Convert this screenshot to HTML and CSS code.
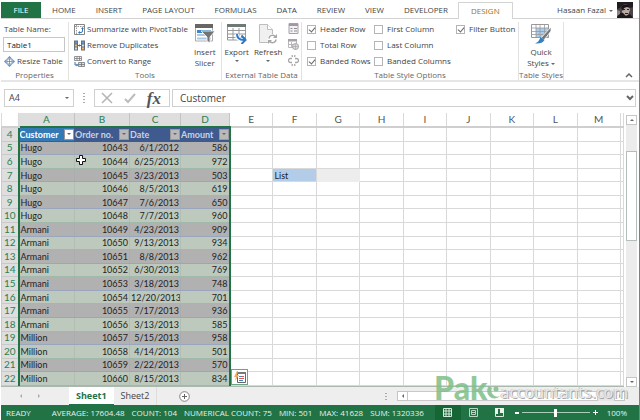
FILE: index.html
```
<!DOCTYPE html>
<html lang="en">
<head>
<meta charset="utf-8">
<title>Table workbook</title>
<link rel="stylesheet" href="styles.css">
<script src="sheet.js" defer></script>
</head>
<body>
<div class="app">
  <nav class="tabs">
    <a class="tab file" href="#file">FILE</a>
    <a class="tab" href="#home">HOME</a>
    <a class="tab" href="#insert">INSERT</a>
    <a class="tab" href="#layout">PAGE LAYOUT</a>
    <a class="tab" href="#formulas">FORMULAS</a>
    <a class="tab" href="#data">DATA</a>
    <a class="tab" href="#review">REVIEW</a>
    <a class="tab" href="#view">VIEW</a>
    <a class="tab" href="#developer">DEVELOPER</a>
    <a class="tab design" href="#design">DESIGN</a>
    <button class="user" type="button">Hasaan Fazal <span class="caret"></span></button>
    <svg class="avatar" viewBox="0 0 16 16"><rect width="16" height="16" fill="#4b4348"/><path d="M0 0h16v5l-3 1-1-3-5-1-4 4-3 1z" fill="#211c20"/><path d="M5 5l3-2 4 1 1 4-2 5-3 1-3-4z" fill="#b7a9a4"/><path d="M4 6l2-3 6 0 1 3-3-1-3 1-1 3z" fill="#171216"/><path d="M6 7h2v1H6zM10 7h2v1h-2zM8 11h3v1H8z" fill="#2b2024"/><path d="M0 16l2-5 4 0 3 3 4-2 3 4z" fill="#1c181c"/><path d="M0 8l3 1v3l-3 2z" fill="#8c8585"/></svg>
  </nav>

  <section class="ribbon">
    <div class="group">
      <div class="body stack">
        <label class="item" for="tname">Table Name:</label>
        <input class="tname" id="tname" value="Table1">
        <button class="item" type="button"><svg class="ico" viewBox="0 0 11 11"><path d="M5.5 0l2 2h-4zM5.5 11l2-2h-4zM0 5.5l2-2v4zM11 5.5l-2-2v4z" fill="#4d8fcb"/><circle cx="5.5" cy="5.5" r="3.800" fill="#a9c9e8"/><path d="M3 3h5v5H3zM3 5.500h5M5.500 3v5" fill="#fff" stroke="#6a7a88" stroke-width=".7"/></svg>Resize Table</button>
      </div>
      <div class="caption">Properties</div>
    </div>
    <div class="group">
      <div class="body">
        <div class="stack">
          <button class="item" type="button"><svg class="ico" viewBox="0 0 11 11"><path d="M.5.500h10v10H.5z" fill="#fff" stroke="#858585"/><path d="M1 2.500h9M2.500 1v9" stroke="#9a9a9a" stroke-dasharray="1.500 1"/><path d="M5 8.500h2q1.500 0 1.500-1.500V4.500" fill="none" stroke="#2f78bf"/><path d="M8.500 3l1.500 2H7zM4 8.500L6 7v3z" fill="#2f78bf"/></svg>Summarize with PivotTable</button>
          <button class="item" type="button"><svg class="ico" viewBox="0 0 11 11"><path d="M0 .5h4v10H0zM7 .5h4v10H7z" fill="#676e76"/><path d="M1 1.500h2v2H1zM8 1.500h2v2H8z" fill="#5b9bd5"/><path d="M1 4.500h2v2H1zM8 7.500h2v2H8z" fill="#f0b35b"/><path d="M1 7.500h2v2H1zM8 4.500h2v2H8z" fill="#cde0f2"/><path d="M4 5.500h3M5.500 4.500v2" stroke="#2f78bf"/></svg>Remove Duplicates</button>
          <button class="item" type="button"><svg class="ico" viewBox="0 0 11 11"><path d="M.5.500h7v4h-7zM.5 2.500h7M3 .5v4M5.500.500v4" fill="#f4f4f4" stroke="#7d7d7d" stroke-width=".8"/><path d="M4.500 6.500h6v4h-6zM4.500 8.500h6M7.500 6.500v4" fill="#cfe1f2" stroke="#777" stroke-width=".8"/><path d="M1 6v3h2" fill="none" stroke="#2f78bf"/><path d="M2.500 7.500l2 1.500-2 1.500z" fill="#2f78bf"/></svg>Convert to Range</button>
        </div>
        <button class="big" type="button"><svg class="bigico" viewBox="0 0 20 20"><path d="M.5 1h17v16H.5z" fill="#fff" stroke="#aaa"/><path d="M0 0h18v4H0z" fill="#666"/><path d="M2 6h14v3H2z" fill="#3f86c6"/><path d="M2 10h14v2H2zM2 13.500h14v2H2z" fill="#a9c9e8"/><path d="M6 7h14l-5 6v6l-3-2v-4z" fill="#737373" stroke="#fff" stroke-width=".8"/></svg>Insert<br>Slicer</button>
      </div>
      <div class="caption">Tools</div>
    </div>
    <div class="group">
      <div class="body center">
        <button class="big export" type="button"><svg class="bigico" viewBox="0 0 20 20"><path d="M.5 1h18v15H.5zM.5 6.500h18M.5 10h18M.5 13.500h18M6 4v12M12 4v12" fill="#fff" stroke="#999"/><path d="M0 0h19v3H0z" fill="#6d7a72"/><path d="M10 10c0 5 3 6 6 6" fill="none" stroke="#fff" stroke-width="4"/><path d="M10 10c0 5 3 6 7 6M14.500 11.500l4 4.500-4 4" fill="none" stroke="#2f78c4" stroke-width="2"/></svg>Export<span class="caret"></span></button>
        <button class="big refresh" type="button"><svg class="bigico" viewBox="0 0 20 20"><path d="M1.500.500h8l5 5v13h-13z" fill="#f0f0f0" stroke="#bdbdbd"/><path d="M9.500.500v5h5" fill="#fff" stroke="#bdbdbd"/><circle cx="14.500" cy="15" r="5" fill="#fff"/><path d="M11 14.500a3.500 3.500 0 0 1 6.500-1.500M18 15.500a3.500 3.500 0 0 1-6.500 1.500" fill="none" stroke="#a8a8a8" stroke-width="1.500"/><path d="M19 10v4h-4zM10 20v-4h4z" fill="#a8a8a8"/></svg>Refresh<span class="caret"></span></button>
        <div class="stack minis">
          <svg class="ico" viewBox="0 0 11 11"><path d="M1 .5h9v10H1z" fill="#f3f1f4" stroke="#a7a0aa"/><path d="M1 1h9v2H1z" fill="#a396a8"/><path d="M2.500 5.500h2M2.500 8h2M6 5.500h3M6 8h3" stroke="#8f8a92"/></svg>
          <svg class="ico" viewBox="0 0 11 11"><path d="M.5.500h8v8h-8zM.5 5.500h8M3.500 3v6" fill="#fff" stroke="#bab6bc"/><path d="M0 0h9v2.500H0z" fill="#aaa0ad"/><circle cx="7.500" cy="7.500" r="3" fill="#ddd" stroke="#a5a5a5"/><path d="M4.500 7.500h6M7.500 4.500v6" stroke="#a5a5a5" stroke-width=".6"/></svg>
          <svg class="ico" viewBox="0 0 11 11"><path d="M4 3.500H2.500a2 2 0 0 0 0 4H4M7 3.500h1.500a2 2 0 0 1 0 4H7M4 0l.5 2M7 0l-.5 2M4 11l.5-2M7 11l-.5-2" fill="none" stroke="#a8a8a8" stroke-width="1.300"/></svg>
        </div>
      </div>
      <div class="caption">External Table Data</div>
    </div>
    <div class="group">
      <div class="body checks">
        <label><input type="checkbox" checked>Header Row</label>
        <label><input type="checkbox">First Column</label>
        <label><input type="checkbox" checked>Filter Button</label>
        <label><input type="checkbox">Total Row</label>
        <label><input type="checkbox">Last Column</label>
        <span></span>
        <label><input type="checkbox" checked>Banded Rows</label>
        <label><input type="checkbox">Banded Columns</label>
      </div>
      <div class="caption">Table Style Options</div>
    </div>
    <div class="group">
      <div class="body center">
        <button class="big" type="button"><svg class="bigico" viewBox="0 0 20 20"><path d="M.5.500h17v13H.5z" fill="#fff" stroke="#999"/><path d="M5 4h12v9H5z" fill="#a9cdec"/><path d="M.5 4h17M.5 7.500h17M.5 10.500h17M5 .5v13M9 .5v13M13.500.500v13" stroke="#999" stroke-width=".8"/><path d="M20 3v4l-7 9-3-2z" fill="#777" stroke="#fff" stroke-width=".8"/><path d="M9.500 13l4 3q-2 4-9.500 3.500 4-1.500 5.500-6.500z" fill="#3580c3"/></svg>Quick<br><span>Styles <span class="caret"></span></span></button>
      </div>
      <div class="caption">Table Styles</div>
    </div>
    <div class="collapse"><svg viewBox="0 0 8 6"><path d="M1 5l3-3 3 3" fill="none" stroke="#666" stroke-width="1.500"/></svg></div>
  </section>

  <section class="formula">
    <div class="box name"><span>A4</span><span class="caret"></span></div>
    <div class="dots"></div>
    <div class="box fx">
      <svg viewBox="0 0 12 12"><path d="M1 1l10 10M11 1L1 11" stroke="#b4b4b4" stroke-width="1.500"/></svg>
      <svg viewBox="0 0 12 12"><path d="M1 7l3 3 7-8" fill="none" stroke="#bcbcbc" stroke-width="2"/></svg>
      <i>fx</i>
    </div>
    <div class="box content"><span>Customer</span><svg viewBox="0 0 8 6"><path d="M1 1l3 3 3-3" fill="none" stroke="#666" stroke-width="2"/></svg></div>
  </section>

  <section class="work">
    <div class="sheet">
      <table class="grid">
        <colgroup><col class="c0"><col class="ca"><col class="cb"><col class="cc"><col class="cd"><col><col><col><col><col><col><col><col><col><col class="ce"></colgroup>
        <thead></thead>
        <tbody></tbody>
      </table>
      <svg class="cursor" viewBox="0 0 10 10"><path d="M3.500.500h3v3h3v3h-3v3h-3v-3h-3v-3h3z" fill="#fff" stroke="#111"/></svg>
      <button class="quick" type="button" aria-label="Quick analysis"><svg viewBox="0 0 12 12"><path d="M3.500 2.500h8v9h-8z" fill="#fff" stroke="#666"/><path d="M3 1h9v2H3z" fill="#777"/><path d="M5 5.500h3M5 9.500h4" stroke="#3f86c6"/><path d="M8 5.500h2M5 7.500h5" stroke="#d65b4e"/><path d="M3 0L0 6h2l-1 4 4-6H3l1-4z" fill="#efaa5c"/></svg></button>
    </div>
    <div class="vscroll"><span class="sb up"></span><span class="thumb"></span><span class="sb down"></span></div>
  </section>

  <footer class="sheets">
    <div class="arrows"><span class="prev"></span><span class="next"></span></div>
    <a class="st active" href="#s1">Sheet1</a>
    <a class="st" href="#s2">Sheet2</a>
    <button class="add" type="button" aria-label="New sheet"><svg viewBox="0 0 11 11"><circle cx="5.500" cy="5.500" r="4.800" fill="#fff" stroke="#777" stroke-width=".9"/><path d="M3 5.500h5M5.500 3v5" stroke="#666"/></svg></button>
    <div class="dots"></div>
    <div class="hscroll"><span class="sb lf"></span><span class="hthumb"></span><span class="sb rt"></span></div>
    <div class="mark"><b>Pak</b><svg viewBox="0 0 16 18"><path d="M5 3a7 7 0 1 0 11 10a6 6 0 0 1-8-8z" fill="#7fbf88"/><circle cx="12" cy="6" r="2.500" fill="#7fbf88"/></svg><span>accountants.com</span></div>
  </footer>

  <div class="status">
    <span>READY</span><span class="avg">AVERAGE: 17604.48</span><span>COUNT: 104</span><span>NUMERICAL COUNT: 75</span><span>MIN: 501</span><span>MAX: 41628</span><span>SUM: 1320336</span>
    <div class="tools">
      <div class="views">
        <span class="on"><svg viewBox="0 0 9 9"><path d="M.5.500h8v8h-8zM.5 3h8M.5 6h8M3 .5v8M6 .5v8" fill="none" stroke="#d9eadf"/></svg></span>
        <span><svg viewBox="0 0 9 9"><path d="M.5.500h8v8h-8zM2.500 2.500h4v4h-4zM3 4.500h3" fill="none" stroke="#b8d6c3"/></svg></span>
        <span><svg viewBox="0 0 9 9"><path d="M.5.500h8v8h-8z" fill="none" stroke="#d9eadf"/><path d="M0 0h3v6H0zM5 0h4v5H5z" fill="#e9f3ec"/></svg></span>
      </div>
      <div class="zoom"><span class="minus"></span><input type="range" aria-label="Zoom" value="50"><span class="plus"></span></div>
      <span class="pct">100%</span>
    </div>
  </div>
</div>
</body>
</html>
```
FILE: styles.css
```
* { box-sizing: border-box; }
body { margin: 0; font: 8px/12px "Open Sans", sans-serif; color: #444; background: #fff; }
button, input { font: inherit; color: inherit; margin: 0; padding: 0; border: 0; background: none; }
button { cursor: pointer; }
a { color: inherit; text-decoration: none; }
svg { display: block; flex: none; }
.app { display: flex; flex-direction: column; height: 100vh; border-right: 1px solid #4f9a7c; padding-left: 1px; overflow: hidden; }
.caret { display: inline-block; border: 2px solid transparent; border-top-color: #666; border-bottom: 0; vertical-align: middle; }

.tabs { display: flex; align-items: stretch; height: 19px; padding-top: 2px; border-bottom: 1px solid #d4d4d4; flex: none; }
.tab { padding: 0 10px; line-height: 16px; white-space: nowrap; }
.file { background: #217346; color: #fff; padding: 0; width: 40px; text-align: center; margin-right: 1px; }
.design { padding: 0 12px; margin: 0 0 -1px; border: 1px solid #d4d4d4; border-bottom: 0; background: #fff; color: #a0711c; line-height: 15px; }
.user { margin-left: auto; white-space: nowrap; }
.user .caret { margin-left: 1px; }
.avatar { width: 16px; height: 16px; margin: 0 6px 0 4px; }

.ribbon { display: grid; grid-template-columns: 68px 153px 80px 217px 45px 1fr; height: 63px; padding-top: 3px; border-bottom: 2px solid #e6e6e6; flex: none; }
.group { display: flex; flex-direction: column; border-right: 1px solid #e2e2e2; min-width: 0; }
.body { display: flex; flex: 1; }
.center { justify-content: center; }
.caption { text-align: center; color: #666; line-height: 10px; white-space: nowrap; }
.stack { display: flex; flex-direction: column; gap: 4px; padding: 1px 0 0 3px; }
.item { display: flex; align-items: center; gap: 2px; height: 12px; white-space: nowrap; }
.body > .stack { padding-left: 5px; }
.ico { width: 11px; height: 11px; }
.tname { width: 62px; height: 15px; margin: -2px 0 -1px -1px; padding: 0 3px; border: 1px solid #c6c6c6; background: #fff; color: #222; }
.big { display: flex; flex-direction: column; align-items: center; justify-content: flex-start; line-height: 11px; padding-top: 2px; }
.big .bigico { width: 20px; height: 20px; margin-bottom: 2px; }
.body > .stack + .big { margin-left: 6px; }
.export .caret, .refresh .caret { margin-top: 3px; }
.refresh { margin-left: 5px; }
.minis { gap: 5px; }
.checks { display: grid; grid-template-columns: 67px 82px 1fr; grid-template-rows: repeat(3, 12px); row-gap: 4px; padding: 1px 0 0 5px; }
.checks label { display: flex; align-items: center; gap: 4px; white-space: nowrap; }
.checks input { appearance: none; position: relative; width: 9px; height: 9px; border: 1px solid #b5b5b5; background: #fff; flex: none; }
.checks input:checked::after { content: ""; position: absolute; left: 2px; top: 0; width: 3px; height: 5px; border: solid #666; border-width: 0 1px 1px 0; transform: rotate(40deg); }
.collapse { display: flex; justify-content: flex-end; align-items: flex-end; padding: 0 6px 2px 0; }
.collapse svg { width: 8px; height: 6px; }

.formula { display: flex; height: 31px; padding: 7px 3px 6px; flex: none; }
.box { display: flex; align-items: center; border: 1px solid #d0d0d0; }
.name { width: 70px; justify-content: space-between; padding: 0 4px; font-size: 9px; }
.formula .dots { margin: 4px 9px 4px 9px; }
.dots { width: 2px; background: repeating-linear-gradient(#aaa 0 1px, transparent 1px 3px); }
.fx { width: 76px; justify-content: space-between; padding: 0 8px 0 6px; }
.fx svg { width: 12px; height: 12px; }
.fx i { font: italic bold 17px/15px "Liberation Serif", serif; color: #555; }
.content { flex: 1; justify-content: space-between; margin-left: 2px; padding: 0 1px 0 7px; font-size: 10px; }
.content svg { width: 8px; height: 6px; }

.work { display: flex; flex: 1; min-height: 0; }
.sheet { position: relative; flex: 1; display: grid; border-bottom: 1px solid #a9b9ae; }
.grid { width: 100%; height: 100%; border-collapse: collapse; table-layout: fixed; font: 9px/11px Lato, sans-serif; color: #1e1e1e; }
.grid th, .grid td { padding: 0 1px; border: 1px solid #d9d9d9; white-space: nowrap; overflow: hidden; }
.grid thead th, .grid tbody th { font-size: 10px; }
.grid tbody th { padding: 0; }
.grid thead th { height: 14px; border-top: 0; border-bottom: 2px solid #cfcfcf; font-weight: normal; color: #555; }
.grid thead .sel { background: #dedede; color: #2b7d4f; border-color: #c4c4c4; border-bottom: 2px solid #217346; }
.grid tbody th { font-weight: normal; background: #dedede; color: #2b8050; border-color: #c9c9c9; border-right: 2px solid #217346; }
.c0 { width: 17px; } .ca { width: 56px; } .cb { width: 55px; } .cc { width: 51px; } .cd { width: 49px; } .ce { width: 3px; }
.grid td.d { background: #bdc9bd; border-color: #a0b9ab #b3bdb3; text-align: right; }
.grid tr.band td.d { background: #b1b1b1; border-color: #9aa6be #aaadaf; }
.grid tbody td.t { text-align: left; }
.grid td.last, .grid tr.band td.last, .grid td.h.last { border-right: 2px solid #217346; }
.grid td.h { background: #3f5a8e; color: #c9d2e2; font-weight: bold; border-color: #3f5a8e; padding: 0; }
.grid td.first { background: #3279b5; color: #fff; }
.head { display: flex; justify-content: space-between; align-items: center; }
.filter { display: flex; align-items: center; justify-content: center; width: 10px; height: 11px; background: #b9b9b9; border: 1px solid #999; flex: none; }
.first .filter { background: #fff; }
.grid td.mark5 { background-image: linear-gradient(135deg, #13692f 3px, transparent 3px); }
.grid td.list { background: #b3cde8; }
.grid td.gray { background: #ededed; border-color: #ededed; }
.cursor { position: absolute; left: 75px; top: 42px; width: 10px; height: 10px; }
.quick { position: absolute; left: 230px; bottom: 1px; width: 17px; height: 16px; border: 1px solid #6fa387; background: #fff; display: grid; place-items: center; }
.quick svg { width: 12px; height: 12px; }

.vscroll { width: 11px; margin: 2px 2px 0 2px; display: flex; flex-direction: column; background: #ececec; }
.sb { display: grid; place-items: center; width: 11px; height: 10px; background: #fff; border: 1px solid #c3c8c5; flex: none; }
.sb::after { content: ""; border: 2px solid transparent; }
.up::after { border-bottom-color: #666; border-top: 0; }
.down::after { border-top-color: #666; border-bottom: 0; }
.lf::after { border-right-color: #666; border-left: 0; }
.rt::after { border-left-color: #666; border-right: 0; }
.thumb { height: 90px; margin: 26px 0 auto; background: #fff; border: 1px solid #b4bdb8; }

.sheets { position: relative; display: flex; align-items: stretch; height: 18px; background: #eee; flex: none; font-size: 9px; }
.arrows { width: 68px; display: flex; align-items: center; gap: 16px; padding-left: 17px; }
.arrows span { border: 2px solid transparent; }
.arrows .prev { border-right-color: #aaa; }
.arrows .next { border-left-color: #aaa; }
.st { padding: 0 7px; line-height: 17px; }
.active { background: #fff; color: #217346; font-weight: bold; border-bottom: 1px solid #217346; }
.st + .st { border-right: 1px solid #ddd; }
.add { margin: 0 auto 0 22px; }
.add svg { width: 11px; height: 11px; }
.sheets .dots { height: 8px; margin: 6px 10px 0 0; }
.hscroll { display: flex; width: 228px; margin: 4px 14px 4px 0; background: #e6e6e6; }
.hthumb { flex: 1; max-width: 190px; background: #fff; border: 1px solid #c9c9c9; border-left: 0; margin-right: auto; }
.mark { position: absolute; right: 11px; bottom: 4px; display: flex; align-items: flex-end; opacity: .85; }
.mark b { font: 900 32px/26px Lato, sans-serif; color: #7fbf88; }
.mark svg { width: 16px; height: 18px; margin-left: -3px; }
.mark span { font: 16px/17px "Open Sans", sans-serif; color: #e8e8e8; text-shadow: 1px 1px 0 #999, -1px 0 0 #c4c4c4; }

.status { display: flex; align-items: center; height: 15px; background: #217346; color: #e6f1ea; padding-left: 5px; gap: 7px; white-space: nowrap; flex: none; }
.avg { margin-left: 14px; }
.tools { display: flex; align-items: center; align-self: stretch; margin-left: auto; }
.views { display: flex; align-self: stretch; }
.views span { display: grid; place-items: center; width: 26px; }
.views svg { width: 9px; height: 9px; }
.views .on { background: #166534; }
.zoom { display: flex; align-items: center; gap: 3px; margin: 0 9px 0 2px; }
.minus { width: 4px; height: 2px; background: #fff; }
.plus { width: 5px; height: 5px; background: linear-gradient(#fff, #fff) center / 5px 1px no-repeat, linear-gradient(#fff, #fff) center / 1px 5px no-repeat; }
.zoom input { appearance: none; width: 68px; height: 8px; background: linear-gradient(#a9ccb7, #a9ccb7) center / 100% 1px no-repeat; }
.zoom input::-webkit-slider-thumb { appearance: none; width: 3px; height: 8px; background: #fff; }
.pct { margin-right: 12px; }
```
FILE: sheet.js
```
const letters = "ABCDEFGHIJKLM".split("");
const rows = [
  ["Hugo", 10643, "6/1/2012", 586], ["Hugo", 10644, "6/25/2013", 972],
  ["Hugo", 10645, "3/23/2013", 503], ["Hugo", 10646, "8/5/2013", 619],
  ["Hugo", 10647, "7/6/2013", 650], ["Hugo", 10648, "7/7/2013", 960],
  ["Armani", 10649, "4/23/2013", 909], ["Armani", 10650, "9/13/2013", 934],
  ["Armani", 10651, "8/8/2013", 962], ["Armani", 10652, "6/30/2013", 769],
  ["Armani", 10653, "3/18/2013", 748], ["Armani", 10654, "12/20/2013", 701],
  ["Armani", 10655, "7/17/2013", 936], ["Armani", 10656, "3/13/2013", 585],
  ["Million", 10657, "5/15/2013", 958], ["Million", 10658, "4/14/2013", 501],
  ["Million", 10659, "2/22/2013", 570], ["Million", 10660, "8/15/2013", 834]
];
document.querySelector(".grid thead").innerHTML =
  "<tr><th></th>" + letters.map((l, i) => `<th class="${i < 4 ? "sel" : ""}">${l}</th>`).join("") + "<th></th></tr>";

const blanks = n => "<td></td>".repeat(n);
let html = "<tr><th>4</th>" + ["Customer", "Order no.", "Date", "Amount"].map((t, i) =>
  `<td class="h ${i === 0 ? "first" : ""} ${i === 3 ? "last" : ""}"><div class="head">${t}<span class="filter"><span class="caret"></span></span></div></td>`
).join("") + blanks(10) + "</tr>";
rows.forEach((r, i) => {
  const flag = i === 0 || rows[i - 1][0] !== r[0];
  html += `<tr class="${i % 2 ? "" : "band"}"><th>${i + 5}</th>` + r.map((v, c) =>
    `<td class="d ${c === 0 ? "t" : ""} ${c === 0 && flag ? "mark5" : ""} ${c === 3 ? "last" : ""}">${v}</td>`).join("");
  html += i === 2 ? '<td></td><td class="list">List</td><td class="gray"></td>' + blanks(7) : blanks(10);
  html += "</tr>";
});
document.querySelector(".grid tbody").innerHTML = html;
```
